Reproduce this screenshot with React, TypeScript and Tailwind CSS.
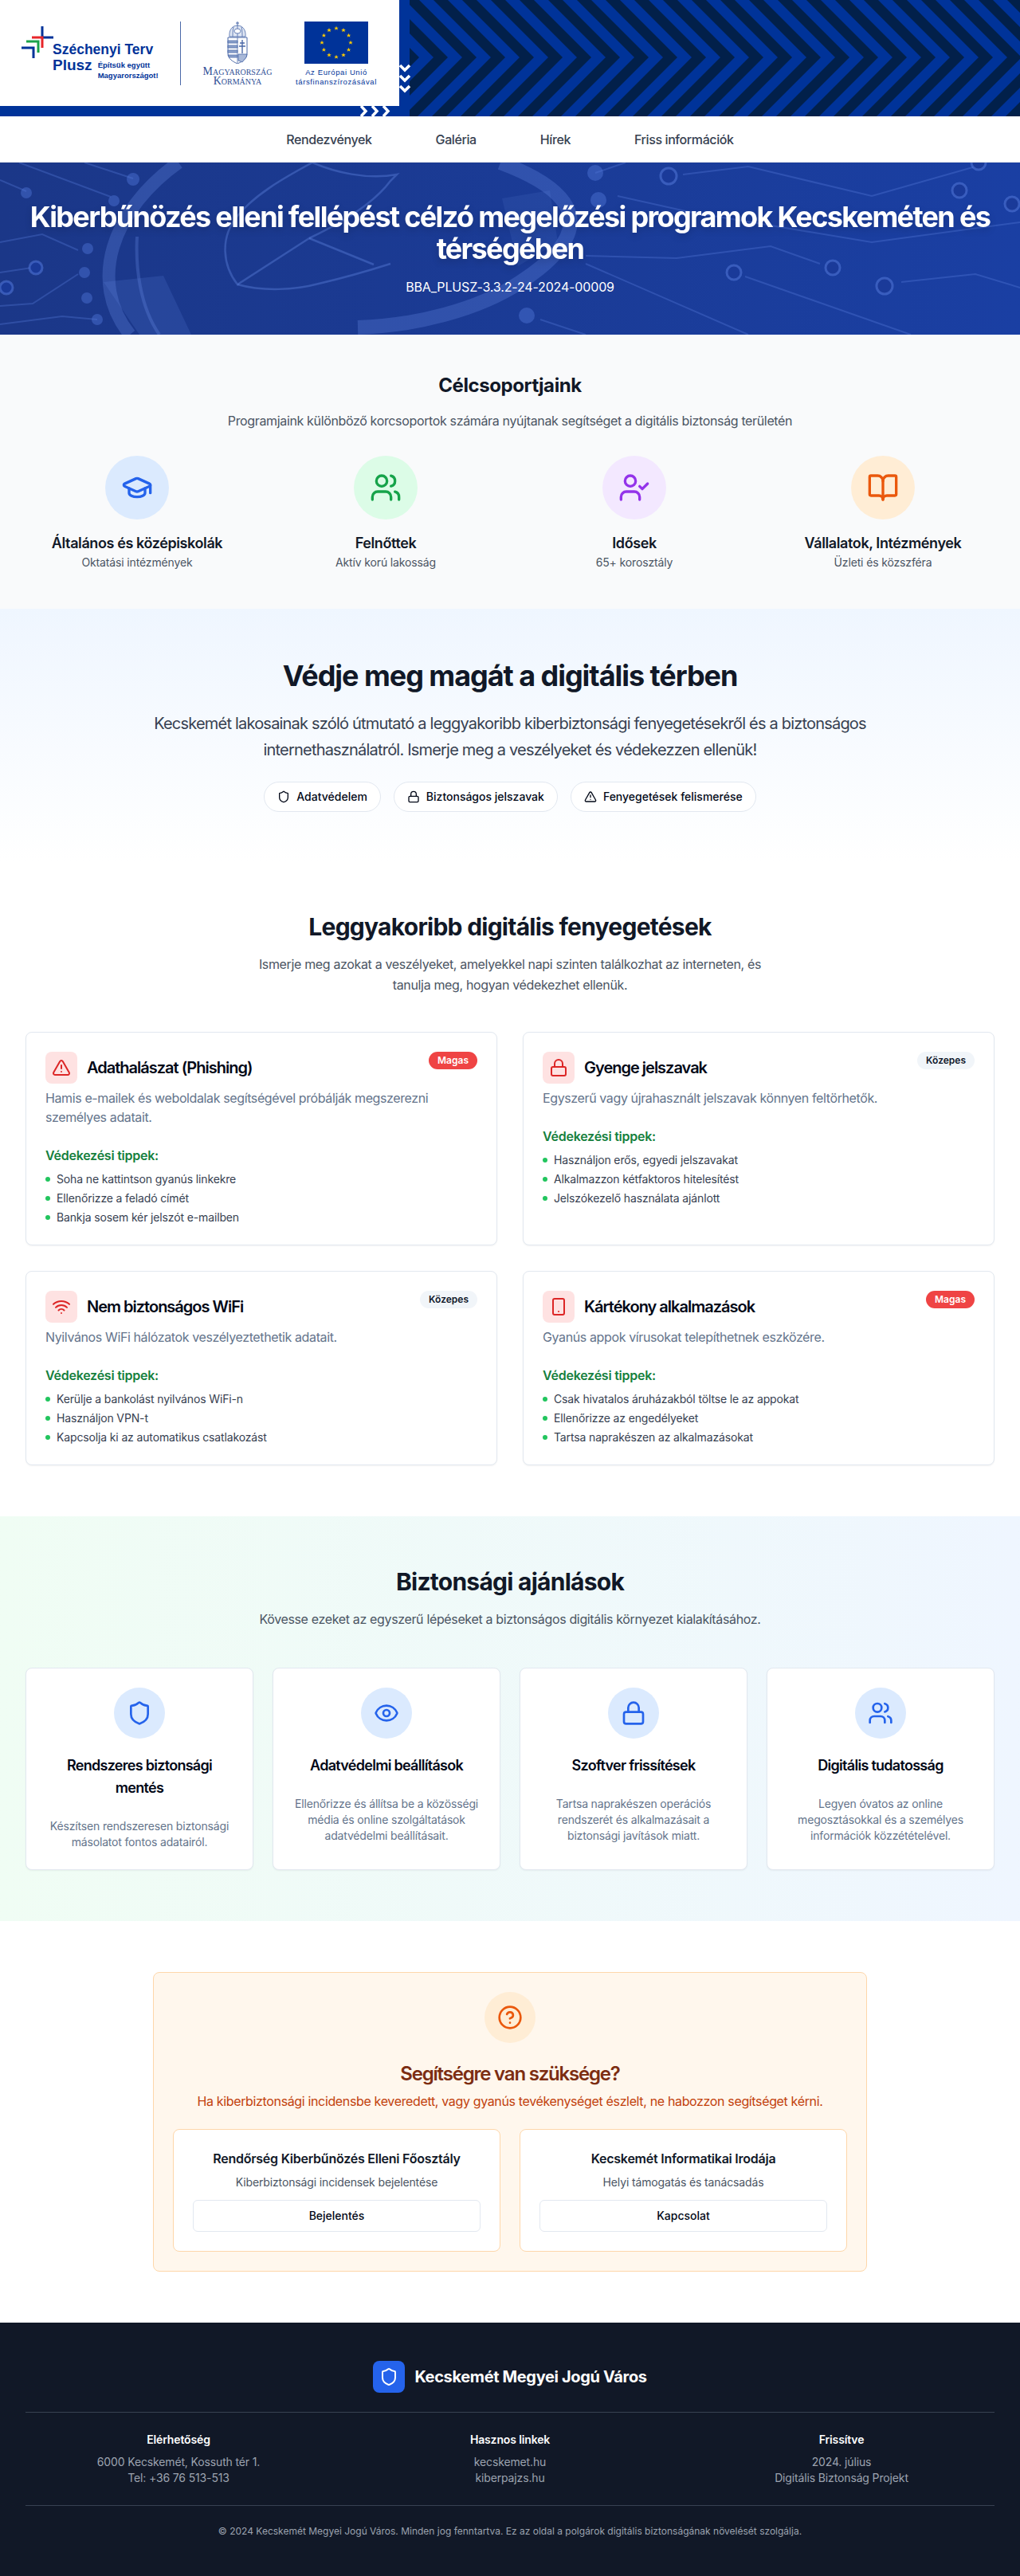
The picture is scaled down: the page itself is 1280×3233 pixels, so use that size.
import { BookOpen, CircleHelp, Eye, GraduationCap, Lock, Shield, Smartphone, TriangleAlert, UserCheck, Users, Wifi } from 'lucide-react';
import React from 'react';

const groups = [
  { icon: GraduationCap, bg: 'bg-[#dbeafe]', color: 'text-[#2563eb]', title: 'Általános és középiskolák', sub: 'Oktatási intézmények' },
  { icon: Users, bg: 'bg-[#dcfce7]', color: 'text-[#16a34a]', title: 'Felnőttek', sub: 'Aktív korú lakosság' },
  { icon: UserCheck, bg: 'bg-[#f3e8ff]', color: 'text-[#9333ea]', title: 'Idősek', sub: '65+ korosztály' },
  { icon: BookOpen, bg: 'bg-[#ffedd5]', color: 'text-[#ea580c]', title: 'Vállalatok, Intézmények', sub: 'Üzleti és közszféra' },
];

const threats = [
  {
    icon: TriangleAlert,
    title: 'Adathalászat (Phishing)',
    level: 'Magas',
    desc: 'Hamis e-mailek és weboldalak segítségével próbálják megszerezni személyes adatait.',
    tips: ['Soha ne kattintson gyanús linkekre', 'Ellenőrizze a feladó címét', 'Bankja sosem kér jelszót e-mailben'],
  },
  {
    icon: Lock,
    title: 'Gyenge jelszavak',
    level: 'Közepes',
    desc: 'Egyszerű vagy újrahasznált jelszavak könnyen feltörhetők.',
    tips: ['Használjon erős, egyedi jelszavakat', 'Alkalmazzon kétfaktoros hitelesítést', 'Jelszókezelő használata ajánlott'],
  },
  {
    icon: Wifi,
    title: 'Nem biztonságos WiFi',
    level: 'Közepes',
    desc: 'Nyilvános WiFi hálózatok veszélyeztethetik adatait.',
    tips: ['Kerülje a bankolást nyilvános WiFi-n', 'Használjon VPN-t', 'Kapcsolja ki az automatikus csatlakozást'],
  },
  {
    icon: Smartphone,
    title: 'Kártékony alkalmazások',
    level: 'Magas',
    desc: 'Gyanús appok vírusokat telepíthetnek eszközére.',
    tips: ['Csak hivatalos áruházakból töltse le az appokat', 'Ellenőrizze az engedélyeket', 'Tartsa naprakészen az alkalmazásokat'],
  },
];

const tips = [
  { icon: Shield, title: 'Rendszeres biztonsági mentés', desc: 'Készítsen rendszeresen biztonsági másolatot fontos adatairól.' },
  { icon: Eye, title: 'Adatvédelmi beállítások', desc: 'Ellenőrizze és állítsa be a közösségi média és online szolgáltatások adatvédelmi beállításait.' },
  { icon: Lock, title: 'Szoftver frissítések', desc: 'Tartsa naprakészen operációs rendszerét és alkalmazásait a biztonsági javítások miatt.' },
  { icon: Users, title: 'Digitális tudatosság', desc: 'Legyen óvatos az online megosztásokkal és a személyes információk közzétételével.' },
];

function ChevronPattern() {
  const tipsX = Array.from({ length: 24 }, (_, i) => 16 + i * 36);
  return (
    <svg className="h-[146px] w-[779px] shrink-0 bg-[#003399]" viewBox="0 0 779 146">
      <defs>
        <clipPath id="stripes">
          <rect x="13" y="0" width="766" height="146" />
        </clipPath>
      </defs>
      <g clipPath="url(#stripes)" fill="none" stroke="#02204a" strokeWidth="12.73">
        {tipsX.map((x) => (
          <path key={x} d={`M${x - 80} -8 L${x} 72 L${x - 80} 152`} />
        ))}
      </g>
      <g fill="none" stroke="#fff" strokeWidth="3.6">
        <path d="M1 82 L7 88 L13 82" />
        <path d="M1 95 L7 101 L13 95" />
        <path d="M1 108 L7 114 L13 108" />
      </g>
    </svg>
  );
}

function SzechenyiLogo() {
  return (
    <div className="ml-[27px] mt-[6px] w-[172px]">
      <svg className="h-10 w-10" viewBox="0 0 40 40" fill="none" strokeWidth="3">
        <path d="M26 0V14H40" stroke="#003399" />
        <path d="M13 14H26V27" stroke="#e8262a" />
        <path d="M6 19H21V33" stroke="#1aa34a" />
        <path d="M0 27H15V40" stroke="#003399" />
      </svg>
      <div className="-mt-[21px] ml-[39px] text-[#003399] [font-family:'Liberation_Sans',sans-serif]">
        <div className="text-[17.5px] font-bold leading-[20px] whitespace-nowrap">Széchenyi Terv</div>
        <div className="flex">
          <div className="text-[19px] font-bold leading-[20px]">Plusz</div>
          <div className="ml-[7px] mt-[3px] text-[9.5px] font-bold leading-[13px] whitespace-nowrap">
            Építsük együtt
            <br />
            Magyarországot!
          </div>
        </div>
      </div>
    </div>
  );
}

function CoatOfArms() {
  return (
    <svg className="h-[53px] w-[26px]" viewBox="0 0 26 53" fill="none" stroke="#4a68a8" strokeWidth="0.8">
      <path d="M13 0V5M11 2H15" strokeWidth="1" />
      <path d="M3 19C2 10 7 5 13 5C19 5 24 10 23 19Z" fill="#dfe6f3" />
      <path d="M8 7C7 11 7 15 7 19M18 7C19 11 19 15 19 19M13 5V19" />
      <ellipse cx="13" cy="12" rx="4" ry="3" fill="#fff" />
      <path d="M1 20H25V40C25 47 19 50 13 53C7 50 1 47 1 40Z" fill="#fff" strokeWidth="1" />
      <path d="M13 20V52" />
      <path d="M1 24H13V27H1ZM1 30H13V33H1ZM1 36H13V39H1ZM1 42H13V45H3Z" fill="#8ea3cc" />
      <path d="M19 23V40M16 27H22M15 31H23" strokeWidth="1.4" />
      <path d="M14 41H25L24 45L19 51L14 49Z" fill="#a9b9d9" />
    </svg>
  );
}

function EuFlag() {
  const stars = Array.from({ length: 12 }, (_, i) => {
    const a = (i * Math.PI) / 6;
    return { x: 40 + 18 * Math.sin(a), y: 26.5 - 18 * Math.cos(a) };
  });
  return (
    <svg className="h-[53px] w-[80px]" viewBox="0 0 80 53">
      <rect width="80" height="53" fill="#003399" />
      {stars.map((s, i) => (
        <path
          key={i}
          transform={`translate(${s.x} ${s.y}) scale(2.8)`}
          fill="#ffcc00"
          d="M0 -1L0.29 -0.31L1 -0.31L0.43 0.12L0.65 0.81L0 0.38L-0.65 0.81L-0.43 0.12L-1 -0.31L-0.29 -0.31Z"
        />
      ))}
    </svg>
  );
}

// circuit board and shield behind the hero title
function HeroBackground() {
  return (
    <svg className="absolute inset-0 h-full w-full" viewBox="0 0 1280 216" fill="none">
      <g stroke="#5f86e6" strokeOpacity="0.3" strokeWidth="2">
        <path d="M24 0L139 43" />
        <path d="M106 0L167 20" />
        <path d="M0 22L33 36" />
        <path d="M0 100L53 90L98 110" />
        <path d="M0 138L40 132" />
        <path d="M0 180L41 177L98 140" />
        <path d="M0 203L78 193L122 197" />
        <path d="M857 15L939 5L1094 42L1224 5" />
        <path d="M747 13L785 0" />
        <path d="M775 42L865 62L1094 100L1280 75" />
        <path d="M735 117L849 120L967 105L1029 127" />
        <path d="M935 143L1143 216" />
        <path d="M1131 150L1224 140L1280 157" />
        <path d="M735 127L939 216" />
        <path d="M678 197L735 216" />
      </g>
      <g stroke="#5f86e6" strokeOpacity="0.45" strokeWidth="3" fill="#1a3a99">
        <circle cx="839" cy="17" r="10" />
        <circle cx="1045" cy="132" r="9" />
        <circle cx="921" cy="138" r="9" />
        <circle cx="1110" cy="155" r="10" />
        <circle cx="1204" cy="35" r="9" />
        <circle cx="1270" cy="52" r="9" />
        <circle cx="1228" cy="0" r="9" />
        <circle cx="45" cy="132" r="8" />
        <circle cx="8" cy="157" r="8" />
      </g>
      <g fill="#4f76d8" fillOpacity="0.45">
        <circle cx="143" cy="48" r="7" />
        <circle cx="167" cy="21" r="8" />
        <circle cx="33" cy="38" r="7" />
        <circle cx="110" cy="108" r="7" />
        <circle cx="106" cy="138" r="7" />
        <circle cx="109" cy="170" r="7" />
        <circle cx="122" cy="197" r="7" />
        <circle cx="661" cy="192" r="10" />
        <circle cx="747" cy="13" r="10" />
        <circle cx="751" cy="47" r="10" />
      </g>
      <g stroke="#6a90ea" strokeOpacity="0.28">
        <path d="M224 0C140 60 110 150 163 216" strokeWidth="16" />
        <path d="M628 0C735 40 745 90 653 150C600 185 520 205 449 207" strokeWidth="18" />
        <path d="M172 93C170 130 175 180 200 216" strokeWidth="4" />
      </g>
      <path d="M130 150L205 142L240 216L175 216Z" fill="#6a90ea" fillOpacity="0.16" />
      <path d="M630 45L690 35L700 100L650 130Z" fill="#6a90ea" fillOpacity="0.12" />
      <g stroke="#6a90ea" strokeOpacity="0.35" strokeWidth="2.5">
        <path d="M392 0C420 12 460 22 498 15L490 23C470 50 430 75 388 95L298 153C280 130 275 95 298 67C320 40 355 20 392 0" />
        <path d="M388 95L469 128" />
        <path d="M298 153C330 162 370 160 400 152C430 145 465 135 490 127" />
      </g>
    </svg>
  );
}

export default function App() {
  return (
    <div className="min-h-screen bg-white text-[#111827] [font-family:Inter,sans-serif]">
      {/* Banner */}
      <div className="flex h-[146px] overflow-hidden bg-white">
        <div className="flex w-[501px] shrink-0 flex-col">
          <div className="flex h-[133px] items-start pt-[27px]">
            <SzechenyiLogo />
            <div className="ml-[27px] h-[80px] w-px bg-[#4a68a8]" />
            <div className="ml-[26px] flex w-[90px] flex-col items-center text-center text-[#2f4f96] [font-family:'Liberation_Serif',serif]">
              <CoatOfArms />
              <div className="mt-[4px] text-[14px] leading-[12px] whitespace-nowrap [font-variant:small-caps]">
                Magyarország
                <br />
                Kormánya
              </div>
            </div>
            <div className="ml-[24px] flex w-[110px] flex-col items-center text-center text-[#003399] [font-family:'Liberation_Sans',sans-serif]">
              <EuFlag />
              <div className="mt-[5px] text-[9.5px] leading-[12px] tracking-[0.6px] whitespace-nowrap">
                Az Európai Unió
                <br />
                társfinanszírozásával
              </div>
            </div>
          </div>
          <div className="flex h-[13px] items-center justify-end bg-[#003399] pr-[9px]">
            <svg className="h-[13px] w-[40px]" viewBox="0 0 40 13" fill="none" stroke="#fff" strokeWidth="3.5">
              <path d="M1 0L7 6.5L1 13M15 0L21 6.5L15 13M29 0L35 6.5L29 13" />
            </svg>
          </div>
        </div>
        <ChevronPattern />
      </div>

      {/* Nav */}
      <nav className="flex h-[58px] items-center justify-center gap-20 border-b border-[#e5e7eb] bg-white text-base font-medium tracking-[-0.025em] text-[#374151]">
        <a>Rendezvények</a>
        <a>Galéria</a>
        <a>Hírek</a>
        <a>Friss információk</a>
      </nav>

      {/* Hero */}
      <section className="relative overflow-hidden bg-gradient-to-r from-[#1b3788] to-[#1a3fa3] px-8 py-12 text-center text-white">
        <HeroBackground />
        <div className="relative">
          <h1 className="mb-4 text-4xl font-bold tracking-[-0.046em] drop-shadow-lg">
            Kiberbűnözés elleni fellépést célzó megelőzési programok Kecskeméten és térségében
          </h1>
          <p className="text-base leading-6 tracking-[-0.01em]">BBA_PLUSZ-3.3.2-24-2024-00009</p>
        </div>
      </section>

      {/* Target groups */}
      <section className="bg-[#f9fafb] px-8 py-12">
        <h2 className="mb-4 text-center text-2xl font-bold tracking-[-0.017em]">Célcsoportjaink</h2>
        <p className="mb-8 text-center tracking-[-0.022em] text-[#4b5563]">
          Programjaink különböző korcsoportok számára nyújtanak segítséget a digitális biztonság területén
        </p>
        <div className="grid grid-cols-4 gap-8">
          {groups.map((g) => (
            <div key={g.title} className="flex flex-col items-center text-center">
              <div className={`mb-4 flex h-20 w-20 items-center justify-center rounded-full ${g.bg}`}>
                <g.icon className={`h-10 w-10 ${g.color}`} />
              </div>
              <h3 className="text-lg font-semibold tracking-[-0.022em]">{g.title}</h3>
              <p className="text-sm tracking-[-0.01em] text-[#4b5563]">{g.sub}</p>
            </div>
          ))}
        </div>
      </section>

      {/* Intro */}
      <section className="bg-gradient-to-b from-[#eff6ff] to-white px-8 pt-16 pb-[62px] text-center">
        <h1 className="mb-6 text-4xl font-bold tracking-[-0.029em]">Védje meg magát a digitális térben</h1>
        <p className="mx-auto mb-6 max-w-4xl text-xl leading-relaxed tracking-[-0.04em] text-[#374151]">
          Kecskemét lakosainak szóló útmutató a leggyakoribb kiberbiztonsági fenyegetésekről és a biztonságos
          internethasználatról. Ismerje meg a veszélyeket és védekezzen ellenük!
        </p>
        <div className="flex justify-center gap-4">
          <span className="flex items-center gap-2 rounded-full border border-[#e2e8f0] bg-white px-4 py-2 text-sm font-medium text-[#020817]">
            <Shield className="h-4 w-4" /> Adatvédelem
          </span>
          <span className="flex items-center gap-2 rounded-full border border-[#e2e8f0] bg-white px-4 py-2 text-sm font-medium text-[#020817]">
            <Lock className="h-4 w-4" /> Biztonságos jelszavak
          </span>
          <span className="flex items-center gap-2 rounded-full border border-[#e2e8f0] bg-white px-4 py-2 text-sm font-medium text-[#020817]">
            <TriangleAlert className="h-4 w-4" /> Fenyegetések felismerése
          </span>
        </div>
      </section>

      {/* Threats */}
      <section className="bg-white px-8 py-16">
        <div className="mb-[46px] text-center">
          <h2 className="mb-4 text-3xl font-bold tracking-[-0.025em]">Leggyakoribb digitális fenyegetések</h2>
          <p className="mx-auto max-w-2xl leading-relaxed tracking-[-0.022em] text-[#4b5563]">
            Ismerje meg azokat a veszélyeket, amelyekkel napi szinten találkozhat az interneten, és tanulja meg, hogyan
            védekezhet ellenük.
          </p>
        </div>
        <div className="grid grid-cols-2 gap-8">
          {threats.map((t) => (
            <div key={t.title} className="rounded-lg border border-[#e2e8f0] bg-white p-6 shadow-[0_1px_2px_rgba(0,0,0,0.05)]">
              <div className="flex items-start justify-between">
                <div className="flex items-center gap-3">
                  <div className="flex h-10 w-10 items-center justify-center rounded-lg bg-[#fee2e2]">
                    <t.icon className="h-6 w-6 text-[#dc2626]" />
                  </div>
                  <h3 className="text-xl font-semibold tracking-[-0.05em] text-[#020817]">{t.title}</h3>
                </div>
                {t.level === 'Magas' ? (
                  <span className="rounded-full bg-[#ef4444] px-[11px] py-[3px] text-xs font-semibold text-white">Magas</span>
                ) : (
                  <span className="rounded-full bg-[#f1f5f9] px-[11px] py-[3px] text-xs font-semibold text-[#0f172a]">Közepes</span>
                )}
              </div>
              <p className="mt-1.5 mb-6 tracking-[-0.024em] text-[#64748b]">{t.desc}</p>
              <h4 className="mb-2 font-semibold tracking-[-0.015em] text-[#15803d]">Védekezési tippek:</h4>
              <ul className="space-y-1 text-sm tracking-[-0.01em] text-[#374151]">
                {t.tips.map((tip) => (
                  <li key={tip} className="flex items-center gap-2">
                    <span className="h-1.5 w-1.5 rounded-full bg-[#22c55e]" />
                    {tip}
                  </li>
                ))}
              </ul>
            </div>
          ))}
        </div>
      </section>

      {/* Recommendations */}
      <section className="bg-gradient-to-r from-[#f0fdf4] to-[#eff6ff] px-8 py-16">
        <div className="mb-12 text-center">
          <h2 className="mb-4 text-3xl font-bold tracking-[-0.025em]">Biztonsági ajánlások</h2>
          <p className="leading-relaxed tracking-[-0.022em] text-[#4b5563]">
            Kövesse ezeket az egyszerű lépéseket a biztonságos digitális környezet kialakításához.
          </p>
        </div>
        <div className="grid grid-cols-4 gap-6">
          {tips.map((t) => (
            <div key={t.title} className="rounded-lg border border-[#e2e8f0] bg-white p-6 text-center shadow-[0_1px_2px_rgba(0,0,0,0.05)]">
              <div className="mx-auto mb-5 flex h-16 w-16 items-center justify-center rounded-full bg-[#dbeafe]">
                <t.icon className="h-8 w-8 text-[#2563eb]" />
              </div>
              <h3 className="mb-6 text-lg font-semibold tracking-[-0.04em] text-[#020817]">{t.title}</h3>
              <p className="text-sm tracking-[-0.012em] text-[#64748b]">{t.desc}</p>
            </div>
          ))}
        </div>
      </section>

      {/* Help */}
      <section className="bg-white px-8 py-16">
        <div className="mx-auto max-w-4xl rounded-lg border border-[#fed7aa] bg-[#fff7ed] p-6 text-center">
          <div className="mx-auto mb-[23px] flex h-16 w-16 items-center justify-center rounded-full bg-[#ffedd5]">
            <CircleHelp className="h-8 w-8 text-[#ea580c]" />
          </div>
          <h2 className="mb-1.5 text-2xl font-semibold tracking-[-0.05em] text-[#7c2d12]">Segítségre van szüksége?</h2>
          <p className="mb-[23px] tracking-[-0.022em] text-[#c2410c]">
            Ha kiberbiztonsági incidensbe keveredett, vagy gyanús tevékenységet észlelt, ne habozzon segítséget kérni.
          </p>
          <div className="grid grid-cols-2 gap-6">
            <div className="rounded-lg border border-[#fed7aa] bg-white p-6">
              <h4 className="mb-2 font-semibold tracking-[-0.015em] text-[#111827]">Rendőrség Kiberbűnözés Elleni Főosztály</h4>
              <p className="mb-3 text-sm tracking-[-0.01em] text-[#4b5563]">Kiberbiztonsági incidensek bejelentése</p>
              <button className="h-10 w-full rounded-md border border-[#e2e8f0] bg-white text-sm font-medium text-[#020817]">Bejelentés</button>
            </div>
            <div className="rounded-lg border border-[#fed7aa] bg-white p-6">
              <h4 className="mb-2 font-semibold tracking-[-0.015em] text-[#111827]">Kecskemét Informatikai Irodája</h4>
              <p className="mb-3 text-sm tracking-[-0.01em] text-[#4b5563]">Helyi támogatás és tanácsadás</p>
              <button className="h-10 w-full rounded-md border border-[#e2e8f0] bg-white text-sm font-medium text-[#020817]">Kapcsolat</button>
            </div>
          </div>
        </div>
      </section>

      {/* Footer */}
      <footer className="bg-[#111827] px-8 py-12 text-white">
        <div className="mb-6 flex items-center justify-center gap-3">
          <div className="flex h-10 w-10 items-center justify-center rounded-lg bg-[#2563eb]">
            <Shield className="h-6 w-6" />
          </div>
          <span className="text-xl font-bold tracking-[-0.018em]">Kecskemét Megyei Jogú Város</span>
        </div>
        <div className="grid grid-cols-3 gap-8 border-y border-[#374151] py-6 text-center text-sm tracking-[-0.01em]">
          <div>
            <h4 className="mb-2 font-semibold">Elérhetőség</h4>
            <p className="text-[#9ca3af]">6000 Kecskemét, Kossuth tér 1.</p>
            <p className="text-[#9ca3af]">Tel: +36 76 513-513</p>
          </div>
          <div>
            <h4 className="mb-2 font-semibold">Hasznos linkek</h4>
            <p className="text-[#9ca3af]">kecskemet.hu</p>
            <p className="text-[#9ca3af]">kiberpajzs.hu</p>
          </div>
          <div>
            <h4 className="mb-2 font-semibold">Frissítve</h4>
            <p className="text-[#9ca3af]">2024. július</p>
            <p className="text-[#9ca3af]">Digitális Biztonság Projekt</p>
          </div>
        </div>
        <p className="pt-6 text-center text-xs text-[#9ca3af]">
          © 2024 Kecskemét Megyei Jogú Város. Minden jog fenntartva. Ez az oldal a polgárok digitális biztonságának növelését szolgálja.
        </p>
      </footer>
    </div>
  );
}
